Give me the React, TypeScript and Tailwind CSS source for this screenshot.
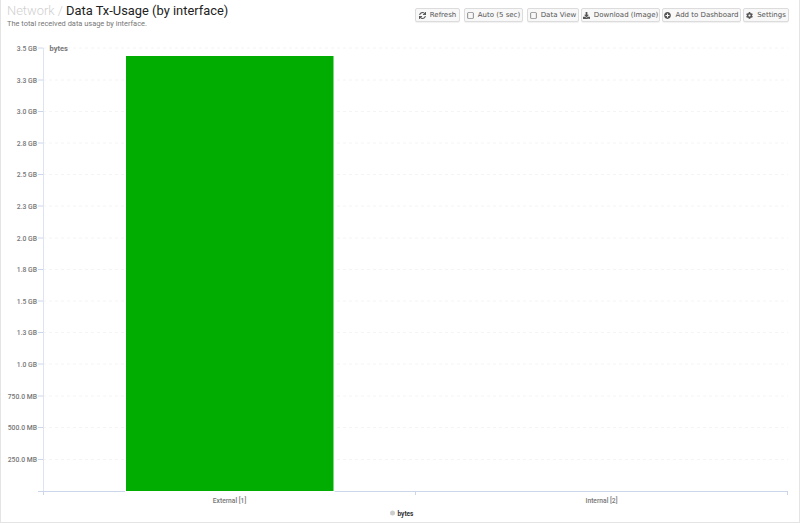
import { FaCog, FaDownload, FaPlusCircle, FaRegSquare, FaSync } from "react-icons/fa";
import type { ReactNode } from "react";

const ticks = [
  { label: "3.5 GB", y: 48 },
  { label: "3.3 GB", y: 80 },
  { label: "3.0 GB", y: 111.5 },
  { label: "2.8 GB", y: 143 },
  { label: "2.5 GB", y: 174.5 },
  { label: "2.3 GB", y: 206 },
  { label: "2.0 GB", y: 238 },
  { label: "1.8 GB", y: 269.5 },
  { label: "1.5 GB", y: 301 },
  { label: "1.3 GB", y: 332.5 },
  { label: "1.0 GB", y: 364 },
  { label: "750.0 MB", y: 396 },
  { label: "500.0 MB", y: 427.5 },
  { label: "250.0 MB", y: 459.5 },
];

const ToolButton = ({ icon, label, className }: { icon: ReactNode; label: string; className: string }) => (
  <button className={`flex h-[14px] items-center justify-center gap-[4px] whitespace-nowrap rounded-[2px] border border-[#dcdcdc] bg-[#f8f8f8] text-[7px] leading-none text-[#555] shadow-[0_1px_1px_rgba(0,0,0,0.06)] ${className}`}>
    {icon}
    <span>{label}</span>
  </button>
);

const Toolbar = () => (
  <div className="flex items-center pt-[8px]">
    <ToolButton className="w-[45px]" icon={<FaSync className="h-[7px] w-[7px]" />} label="Refresh" />
    <ToolButton className="ml-[4px] w-[59px]" icon={<FaRegSquare className="h-[7px] w-[7px]" />} label="Auto (5 sec)" />
    <ToolButton className="ml-[4px] w-[52px]" icon={<FaRegSquare className="h-[7px] w-[7px]" />} label="Data View" />
    <ToolButton className="ml-[2px] w-[79px]" icon={<FaDownload className="h-[7px] w-[7px]" />} label="Download (Image)" />
    <ToolButton className="ml-[2px] w-[79px]" icon={<FaPlusCircle className="h-[7px] w-[7px]" />} label="Add to Dashboard" />
    <ToolButton className="ml-[2px] w-[46px]" icon={<FaCog className="h-[7px] w-[7px]" />} label="Settings" />
  </div>
);

// chart drawn in page coordinates, svg starts at y=32
const Chart = () => (
  <svg width="798" height="489" viewBox="1 32 798 489" className="block font-['Roboto',sans-serif]">
    {ticks.map((t) => (
      <g key={t.label}>
        <line x1="43" x2="788" y1={t.y} y2={t.y} stroke="#f4f4f4" strokeWidth="1" strokeDasharray="3 3" />
        <line x1="38" x2="43" y1={t.y} y2={t.y} stroke="#ccd6eb" strokeWidth="1" />
        <text x="37" y={t.y + 2.5} textAnchor="end" fontSize="6.8" fontWeight="500" fill="#777">
          {t.label}
        </text>
      </g>
    ))}
    <line x1="43.5" x2="43.5" y1="48" y2="492" stroke="#dde4f1" strokeWidth="1" />
    <line x1="38" x2="788" y1="491.5" y2="491.5" stroke="#ccd6eb" strokeWidth="1" />
    <line x1="43.5" x2="43.5" y1="491" y2="495" stroke="#ccd6eb" strokeWidth="1" />
    <line x1="415.5" x2="415.5" y1="491" y2="495" stroke="#ccd6eb" strokeWidth="1" />
    <line x1="787.5" x2="787.5" y1="491" y2="495" stroke="#ccd6eb" strokeWidth="1" />
    <rect x="125.5" y="55.5" width="208.5" height="436" fill="#00ad00" stroke="#ffffff" strokeWidth="1" />
    <text x="49.5" y="50.5" fontSize="7.5" fontWeight="700" fill="#777">bytes</text>
    <text x="229.5" y="503" textAnchor="middle" fontSize="6.7" fontWeight="500" fill="#777">External [1]</text>
    <text x="601.5" y="503" textAnchor="middle" fontSize="6.7" fontWeight="500" fill="#777">Internal [2]</text>
    <circle cx="392.5" cy="513" r="2.5" fill="#cccccc" />
    <text x="397.5" y="515.5" fontSize="6.5" fontWeight="700" fill="#333">bytes</text>
  </svg>
);

export default function App() {
  return (
    <div className="h-[523px] w-[800px] overflow-hidden border-x border-b border-[#e4e4e4] bg-white font-['Roboto',sans-serif]">
      <div className="flex h-[32px] justify-between pl-[6px] pr-[10px]">
        <div className="pt-[2px]">
          <h1 className="whitespace-nowrap text-[12.9px] font-normal leading-[17px]">
            <span className="font-light text-[#d0d0d0]">Network / </span>
            <span className="text-[#222]">Data Tx-Usage (by interface)</span>
          </h1>
          <p className="-mt-[0.5px] text-[7.45px] leading-[9px] text-[#777]">The total received data usage by interface.</p>
        </div>
        <div className="font-['DejaVu_Sans',sans-serif]">
          <Toolbar />
        </div>
      </div>
      <Chart />
    </div>
  );
}
